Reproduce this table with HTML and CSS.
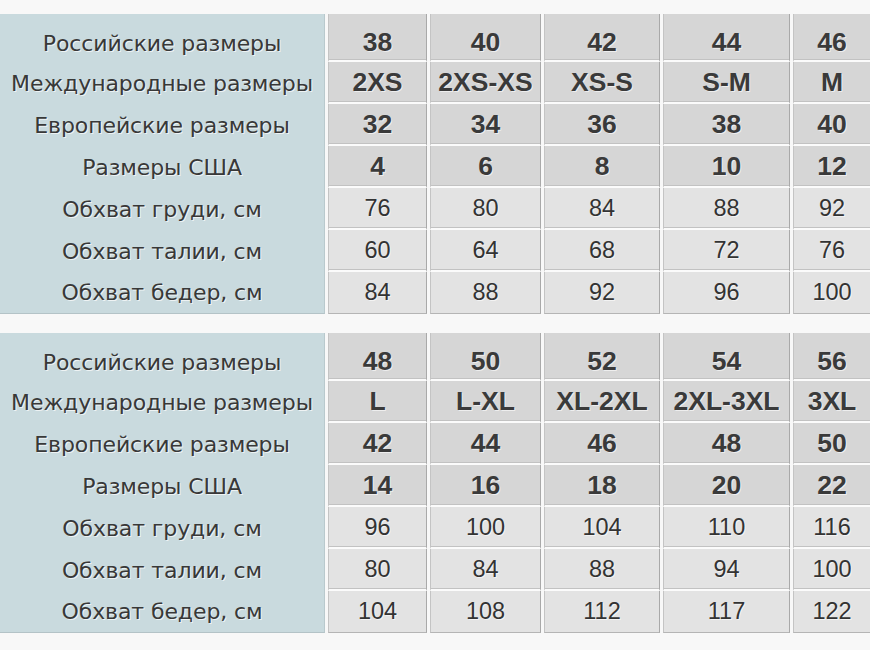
FILE: index.html
```html
<!DOCTYPE html>
<html lang="ru">
<head>
<meta charset="utf-8">
<link rel="stylesheet" href="styles.css">
<title>Таблица размеров</title>
</head>
<body>
<div class="page">
  <div class="sizes">
    <div class="label first">Российские размеры</div>
    <div class="cell bold first">38</div><div class="cell bold first">40</div><div class="cell bold first">42</div><div class="cell bold first">44</div><div class="cell bold first">46</div>
    <div class="label">Международные размеры</div>
    <div class="cell bold">2XS</div><div class="cell bold">2XS-XS</div><div class="cell bold">XS-S</div><div class="cell bold">S-M</div><div class="cell bold">M</div>
    <div class="label">Европейские размеры</div>
    <div class="cell bold">32</div><div class="cell bold">34</div><div class="cell bold">36</div><div class="cell bold">38</div><div class="cell bold">40</div>
    <div class="label">Размеры США</div>
    <div class="cell bold">4</div><div class="cell bold">6</div><div class="cell bold">8</div><div class="cell bold">10</div><div class="cell bold">12</div>
    <div class="label">Обхват груди, см</div>
    <div class="cell">76</div><div class="cell">80</div><div class="cell">84</div><div class="cell">88</div><div class="cell">92</div>
    <div class="label">Обхват талии, см</div>
    <div class="cell">60</div><div class="cell">64</div><div class="cell">68</div><div class="cell">72</div><div class="cell">76</div>
    <div class="label last">Обхват бедер, см</div>
    <div class="cell last">84</div><div class="cell last">88</div><div class="cell last">92</div><div class="cell last">96</div><div class="cell last">100</div>
  </div>

  <div class="sizes">
    <div class="label first">Российские размеры</div>
    <div class="cell bold first">48</div><div class="cell bold first">50</div><div class="cell bold first">52</div><div class="cell bold first">54</div><div class="cell bold first">56</div>
    <div class="label">Международные размеры</div>
    <div class="cell bold">L</div><div class="cell bold">L-XL</div><div class="cell bold">XL-2XL</div><div class="cell bold">2XL-3XL</div><div class="cell bold">3XL</div>
    <div class="label">Европейские размеры</div>
    <div class="cell bold">42</div><div class="cell bold">44</div><div class="cell bold">46</div><div class="cell bold">48</div><div class="cell bold">50</div>
    <div class="label">Размеры США</div>
    <div class="cell bold">14</div><div class="cell bold">16</div><div class="cell bold">18</div><div class="cell bold">20</div><div class="cell bold">22</div>
    <div class="label">Обхват груди, см</div>
    <div class="cell">96</div><div class="cell">100</div><div class="cell">104</div><div class="cell">110</div><div class="cell">116</div>
    <div class="label">Обхват талии, см</div>
    <div class="cell">80</div><div class="cell">84</div><div class="cell">88</div><div class="cell">94</div><div class="cell">100</div>
    <div class="label last">Обхват бедер, см</div>
    <div class="cell last">104</div><div class="cell last">108</div><div class="cell last">112</div><div class="cell last">117</div><div class="cell last">122</div>
  </div>
</div>
</body>
</html>
```

FILE: styles.css
```css
html, body {
  margin: 0;
  padding: 0;
  background: #f8f8f8;
}

.page {
  padding-top: 14px;
  display: flex;
  flex-direction: column;
  gap: 19px;
  width: 870px;
}

.sizes {
  display: grid;
  grid-template-columns: 325px 99px 111px 116px 127px 78px;
  grid-template-rows: 48px repeat(5, 42px) 42px;
  column-gap: 3px;
  background: #f8f8f8;
}

.label {
  background: #c9dade;
  border-right: 1px solid #b9c9cd;
  font-family: "DejaVu Sans", Verdana, sans-serif;
  font-size: 22px;
  color: #383838;
  text-shadow: 1px 1px 0 rgba(255, 255, 255, 0.7);
  display: flex;
  align-items: center;
  justify-content: center;
  white-space: nowrap;
  letter-spacing: -0.1px;
}

.label.first {
  padding-top: 10px;
}

.label.last {
  border-bottom: 1px solid #b4c3c7;
}

.cell {
  background: #e3e3e3;
  border-left: 1px solid #c4c4c4;
  border-right: 1px solid #a9a9a9;
  border-bottom: 2px solid #fbfbfb;
  box-shadow: inset 0 -1px 0 #c2c2c2;
  font-family: "Liberation Sans", Arial, sans-serif;
  font-size: 23.5px;
  color: #333333;
  display: flex;
  align-items: center;
  justify-content: center;
  white-space: nowrap;
  text-shadow: 1px 1px 0 rgba(255, 255, 255, 0.6);
}

.cell.bold {
  background: #d6d6d6;
  font-weight: bold;
  font-size: 26.5px;
  color: #3a3a3a;
}

.cell.first {
  padding-top: 10px;
}

.cell.last {
  border-bottom: 1px solid #b5b5b5;
  box-shadow: none;
}
```
